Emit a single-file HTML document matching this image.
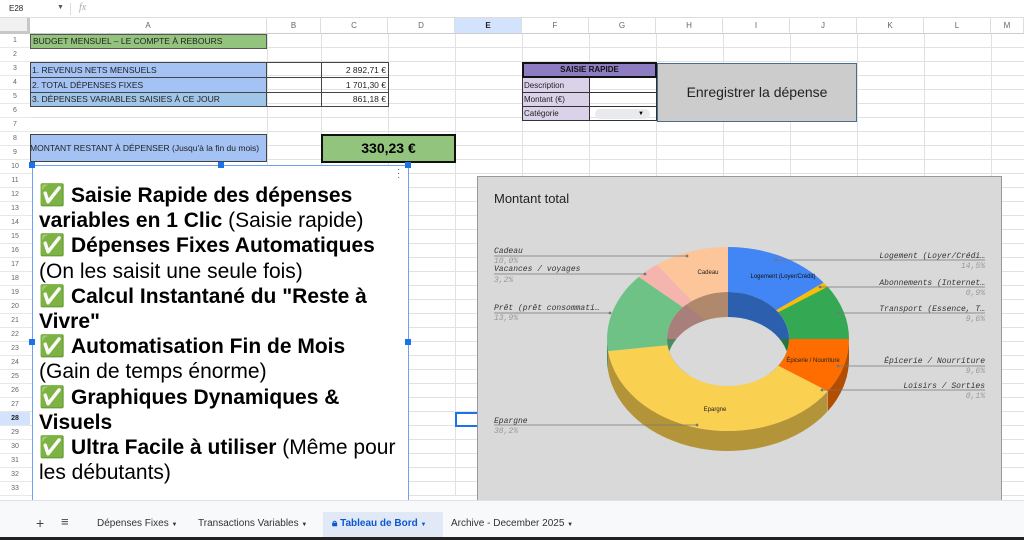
<!DOCTYPE html>
<html><head><meta charset="utf-8"><style>
*{margin:0;padding:0;box-sizing:border-box}
body{width:1024px;height:540px;overflow:hidden;background:#fff;font-family:"Liberation Sans",Arial,sans-serif;position:relative}
.a{position:absolute}
.grid{position:absolute;left:30px;top:34px;width:994px;height:462px;
background-image:repeating-linear-gradient(to bottom,transparent 0 13px,#e1e1e1 13px 14px);}
.vl{position:absolute;top:18px;width:1px;height:478px;background:#e1e1e1}
.ch{position:absolute;top:18px;height:16px;font-size:8px;color:#666;text-align:center;line-height:16px;border-right:1px solid #ddd;border-bottom:1px solid #ccc;background:#fff}
.rh{position:absolute;left:0;width:30px;height:14px;font-size:7px;color:#666;text-align:center;line-height:14px;background:#fff;border-bottom:1px solid #e8e8e8}
.cell{position:absolute;font-size:8.5px;color:#222;line-height:14px;white-space:nowrap;overflow:hidden}
.big{font-size:21px;line-height:25.2px;color:#000;white-space:nowrap}
.big b{font-weight:bold}
.tab{position:absolute;top:518px;font-size:10px;color:#333}
</style></head><body>
<div class="a" style="left:0;top:0;width:1024px;height:18px;background:#fff;border-bottom:1px solid #ddd"></div>
<div class="a" style="left:9px;top:4px;font-size:8px;color:#222">E28</div>
<div class="a" style="left:57px;top:4px;font-size:7px;color:#555">▼</div>
<div class="a" style="left:70px;top:3px;width:1px;height:12px;background:#ddd"></div>
<div class="a" style="left:79px;top:2px;font-size:10px;color:#aaa;font-style:italic;font-family:'Liberation Serif',serif">fx</div>

<div class="grid"></div>
<div class="vl" style="left:267px"></div><div class="vl" style="left:321px"></div><div class="vl" style="left:388px"></div><div class="vl" style="left:455px"></div><div class="vl" style="left:522px"></div><div class="vl" style="left:589px"></div><div class="vl" style="left:656px"></div><div class="vl" style="left:723px"></div><div class="vl" style="left:790px"></div><div class="vl" style="left:857px"></div><div class="vl" style="left:924px"></div><div class="vl" style="left:991px"></div>

<div class="a" style="left:0;top:18px;width:1024px;height:16px;background:#fff;border-bottom:1px solid #ccc"></div>
<div class="a" style="left:0;top:18px;width:30px;height:16px;background:#f1f1f1;border-right:3px solid #c8c8c8;border-bottom:3px solid #c8c8c8"></div>
<div class="ch" style="left:30px;width:237px">A</div>
<div class="ch" style="left:267px;width:54px">B</div>
<div class="ch" style="left:321px;width:67px">C</div>
<div class="ch" style="left:388px;width:67px">D</div>
<div class="ch" style="left:455px;width:67px;background:#d3e3fd;color:#1f1f1f;font-weight:bold">E</div>
<div class="ch" style="left:522px;width:67px">F</div>
<div class="ch" style="left:589px;width:67px">G</div>
<div class="ch" style="left:656px;width:67px">H</div>
<div class="ch" style="left:723px;width:67px">I</div>
<div class="ch" style="left:790px;width:67px">J</div>
<div class="ch" style="left:857px;width:67px">K</div>
<div class="ch" style="left:924px;width:67px">L</div>
<div class="ch" style="left:991px;width:33px">M</div>

<div class="a" style="left:0;top:34px;width:30px;height:462px;border-right:1px solid #ccc">
<div class="rh" style="top:0">1</div><div class="rh" style="top:14px">2</div><div class="rh" style="top:28px">3</div><div class="rh" style="top:42px">4</div><div class="rh" style="top:56px">5</div><div class="rh" style="top:70px">6</div><div class="rh" style="top:84px">7</div><div class="rh" style="top:98px">8</div><div class="rh" style="top:112px">9</div><div class="rh" style="top:126px">10</div><div class="rh" style="top:140px">11</div><div class="rh" style="top:154px">12</div><div class="rh" style="top:168px">13</div><div class="rh" style="top:182px">14</div><div class="rh" style="top:196px">15</div><div class="rh" style="top:210px">16</div><div class="rh" style="top:224px">17</div><div class="rh" style="top:238px">18</div><div class="rh" style="top:252px">19</div><div class="rh" style="top:266px">20</div><div class="rh" style="top:280px">21</div><div class="rh" style="top:294px">22</div><div class="rh" style="top:308px">23</div><div class="rh" style="top:322px">24</div><div class="rh" style="top:336px">25</div><div class="rh" style="top:350px">26</div><div class="rh" style="top:364px">27</div><div class="rh" style="top:378px;background:#d3e3fd;font-weight:bold;color:#1f1f1f">28</div><div class="rh" style="top:392px">29</div><div class="rh" style="top:406px">30</div><div class="rh" style="top:420px">31</div><div class="rh" style="top:434px">32</div><div class="rh" style="top:448px">33</div>
</div>

<div class="cell" style="left:30px;top:34px;width:237px;height:15px;background:#93c47d;border:1px solid #555;padding-left:2px;line-height:13px">BUDGET MENSUEL – LE COMPTE À REBOURS</div>
<div class="a" style="left:30px;top:62px;width:237px;height:45px;background:#a4c2f4;border:1px solid #444"></div>
<div class="cell" style="left:32px;top:63px">1. REVENUS NETS MENSUELS</div>
<div class="a" style="left:30px;top:77px;width:237px;height:1px;background:#444"></div>
<div class="cell" style="left:32px;top:78px">2. TOTAL DÉPENSES FIXES</div>
<div class="a" style="left:30px;top:92px;width:237px;height:1px;background:#444"></div>
<div class="a" style="left:31px;top:93px;width:235px;height:13px;background:#9fc5e8"></div>
<div class="cell" style="left:32px;top:92px">3. DÉPENSES VARIABLES SAISIES À CE JOUR</div>
<div class="a" style="left:267px;top:62px;width:122px;height:45px;border:1px solid #444;border-left:none"></div>
<div class="a" style="left:321px;top:62px;width:1px;height:45px;background:#444"></div>
<div class="a" style="left:267px;top:77px;width:122px;height:1px;background:#444"></div>
<div class="a" style="left:267px;top:92px;width:122px;height:1px;background:#444"></div>
<div class="cell" style="left:322px;top:63px;width:64px;text-align:right">2 892,71 €</div>
<div class="cell" style="left:322px;top:78px;width:64px;text-align:right">1 701,30 €</div>
<div class="cell" style="left:322px;top:92px;width:64px;text-align:right">861,18 €</div>

<div class="a" style="left:30px;top:134px;width:237px;height:28px;background:#a4c2f4;border:1px solid #444"></div>
<div class="cell" style="left:30px;top:141px;width:237px">MONTANT RESTANT À DÉPENSER (Jusqu'à la fin du mois)</div>
<div class="a" style="left:321px;top:134px;width:135px;height:29px;background:#93c47d;border:2px solid #111;font-size:14px;font-weight:bold;text-align:center;line-height:25px">330,23 €</div>

<div class="a" style="left:522px;top:62px;width:135px;height:16px;background:#8e7cc3;border:2px solid #111;font-size:8px;font-weight:bold;text-align:center;line-height:12px;color:#111">SAISIE RAPIDE</div>
<div class="a" style="left:522px;top:78px;width:135px;height:43px;border:1px solid #333;border-top:none"></div>
<div class="a" style="left:523px;top:78px;width:66px;height:42px;background:#d9d2e9"></div>
<div class="a" style="left:589px;top:78px;width:1px;height:43px;background:#333"></div>
<div class="a" style="left:522px;top:92px;width:135px;height:1px;background:#333"></div>
<div class="a" style="left:522px;top:106px;width:135px;height:1px;background:#333"></div>
<div class="cell" style="left:524px;top:79px;font-size:8px">Description</div>
<div class="cell" style="left:524px;top:93px;font-size:8px">Montant (€)</div>
<div class="cell" style="left:524px;top:107px;font-size:8px">Catégorie</div>
<div class="a" style="left:595px;top:109px;width:55px;height:10px;background:#e8eaed;border-radius:5px;font-size:6px;text-align:right;padding-right:6px;line-height:10px">▼</div>
<div class="a" style="left:657px;top:63px;width:200px;height:59px;background:#cccccc;border:1px solid #4a6b8a;font-size:14px;text-align:center;line-height:57px;color:#222">Enregistrer la dépense</div>

<div class="a" style="left:455px;top:412px;width:68px;height:15px;border:2px solid #1a73e8"></div>

<div class="a" style="left:32px;top:165px;width:377px;height:336px;background:#fff;border:1px solid #6ea0ef"></div>
<div class="a" style="left:29px;top:162px;width:6px;height:6px;background:#1a73e8"></div>
<div class="a" style="left:218px;top:162px;width:6px;height:6px;background:#1a73e8"></div>
<div class="a" style="left:405px;top:162px;width:6px;height:6px;background:#1a73e8"></div>
<div class="a" style="left:29px;top:339px;width:6px;height:6px;background:#1a73e8"></div>
<div class="a" style="left:405px;top:339px;width:6px;height:6px;background:#1a73e8"></div>
<div class="a" style="left:397px;top:168px;font-size:10px;color:#555;line-height:4px">·<br>·<br>·</div>
<div class="a big" style="left:39px;top:183px">
<span style="color:#3ca23c">✅</span> <b>Saisie Rapide des dépenses</b><br>
<b>variables en 1 Clic</b> (Saisie rapide)<br>
<span style="color:#3ca23c">✅</span> <b>Dépenses Fixes Automatiques</b><br>
(On les saisit une seule fois)<br>
<span style="color:#3ca23c">✅</span> <b>Calcul Instantané du "Reste à</b><br>
<b>Vivre"</b><br>
<span style="color:#3ca23c">✅</span> <b>Automatisation Fin de Mois</b><br>
(Gain de temps énorme)<br>
<span style="color:#3ca23c">✅</span> <b>Graphiques Dynamiques &amp;</b><br>
<b>Visuels</b><br>
<span style="color:#3ca23c">✅</span> <b>Ultra Facile à utiliser</b> (Même pour<br>
les débutants)
</div>

<div class="a" style="left:477px;top:176px;width:525px;height:325px;background:#d9d9d9;border:1px solid #999"></div>
<div class="a" style="left:494px;top:191px;font-size:13px;color:#222">Montant total</div>
<svg class="a" style="left:0;top:0" width="1024" height="540" viewBox="0 0 1024 540">
<path d="M849 339 A121 92 0 0 1 827.7 391.2 L827.7 411.2 A121 92 0 0 0 849 359 Z" fill="#b34d00"/>
<path d="M827.2 391.7 A121 92 0 0 1 608.1 351.1 L608.1 371.1 A121 92 0 0 0 827.2 411.7 Z" fill="#b39438"/>
<path d="M608.1 351.1 A121 92 0 0 1 607 339 L607 359 A121 92 0 0 0 608.1 371.1 Z" fill="#4e8a5e"/>
<path d="M728 247 A121 92 0 0 1 823.6 282.6 L776.2 310.2 A61 47 0 0 0 728 292 Z" fill="#4285f4"/>
<path d="M823.6 282.6 A121 92 0 0 1 827.7 286.8 L778.2 312.3 A61 47 0 0 0 776.2 310.2 Z" fill="#fbbc04"/>
<path d="M827.7 286.8 A121 92 0 0 1 849 339 L789 339 A61 47 0 0 0 778.2 312.3 Z" fill="#34a853"/>
<path d="M849 339 A121 92 0 0 1 827.7 391.2 L778.2 365.7 A61 47 0 0 0 789 339 Z" fill="#ff6d01"/>
<path d="M827.7 391.2 A121 92 0 0 1 608.1 351.1 L667.5 345.2 A61 47 0 0 0 778.2 365.7 Z" fill="#f9d050"/>
<path d="M608.1 351.1 A121 92 0 0 1 638.8 276.9 L683 307.3 A61 47 0 0 0 667.5 345.2 Z" fill="#6fc286"/>
<path d="M638.8 276.9 A121 92 0 0 1 656.9 264.6 L692.1 301 A61 47 0 0 0 683 307.3 Z" fill="#f5b5ae"/>
<path d="M656.9 264.6 A121 92 0 0 1 728 247 L728 292 A61 47 0 0 0 692.1 301 Z" fill="#fdc69a"/>
<clipPath id="h"><ellipse cx="728" cy="339" rx="61" ry="47"/></clipPath>
<g clip-path="url(#h)">
<path d="M728 339 L728 280 L800 280 L800 339 Z" fill="#2c5fae"/>
<path d="M728 339 L800 339 L800 400 Z" fill="#23783c"/>
<path d="M728 339 L660 320 L660 280 L728 280 Z" fill="#b0896c"/>
<path d="M728 339 L680 300 L660 300 L660 339 Z" fill="#a87f7b"/>
<path d="M728 339 L660 339 L660 400 Z" fill="#4d8a5e"/>
<ellipse cx="728" cy="364" rx="61" ry="47" fill="#d9d9d9"/>
</g>
<g font-family="Liberation Sans,sans-serif" font-size="6" fill="#222" text-anchor="middle">
<text x="708" y="274">Cadeau</text>
<text x="783" y="278" fill="#111">Logement (Loyer/Crédit)</text>
<text x="813" y="362">Épicerie / Nourriture</text>
<text x="715" y="411">Epargne</text>
</g>
<g stroke="#777" stroke-width="0.8" fill="#777">
<line x1="494" y1="256" x2="687" y2="256"/><circle cx="687" cy="256" r="1"/>
<line x1="494" y1="274" x2="645" y2="274"/><circle cx="645" cy="274" r="1"/>
<line x1="494" y1="313" x2="610" y2="313"/><circle cx="610" cy="313" r="1"/>
<line x1="494" y1="425" x2="697" y2="425"/><circle cx="697" cy="425" r="1"/>
<line x1="776" y1="260" x2="985" y2="260"/><circle cx="776" cy="260" r="1"/>
<line x1="820" y1="287" x2="985" y2="287"/><circle cx="820" cy="287" r="1"/>
<line x1="838" y1="313" x2="985" y2="313"/><circle cx="838" cy="313" r="1"/>
<line x1="838" y1="366" x2="985" y2="366"/><circle cx="838" cy="366" r="1"/>
<line x1="822" y1="390" x2="985" y2="390"/><circle cx="822" cy="390" r="1"/>
</g>
<g font-family="Liberation Mono,monospace" font-size="8" font-style="italic">
<text x="494" y="253" fill="#333">Cadeau</text><text x="494" y="263" fill="#999">10,0%</text>
<text x="494" y="271" fill="#333">Vacances / voyages</text><text x="494" y="282" fill="#999">3,2%</text>
<text x="494" y="310" fill="#333">Prêt (prêt consommati…</text><text x="494" y="320" fill="#999">13,9%</text>
<text x="494" y="423" fill="#333">Epargne</text><text x="494" y="433" fill="#999">38,2%</text>
<g text-anchor="end">
<text x="985" y="258" fill="#333">Logement (Loyer/Crédi…</text><text x="985" y="268" fill="#999">14,5%</text>
<text x="985" y="285" fill="#333">Abonnements (Internet…</text><text x="985" y="295" fill="#999">0,9%</text>
<text x="985" y="311" fill="#333">Transport (Essence, T…</text><text x="985" y="321" fill="#999">9,6%</text>
<text x="985" y="363" fill="#333">Épicerie / Nourriture</text><text x="985" y="373" fill="#999">9,6%</text>
<text x="985" y="388" fill="#333">Loisirs / Sorties</text><text x="985" y="398" fill="#999">0,1%</text>
</g></g>
</svg>

<div class="a" style="left:0;top:500px;width:1024px;height:37px;background:#f8f9fa;border-top:1px solid #e0e0e0"></div>
<div class="a" style="left:36px;top:515px;font-size:14px;color:#444">+</div>
<div class="a" style="left:61px;top:514px;font-size:13px;color:#444">≡</div>
<div class="tab" style="left:97px">Dépenses Fixes <span style="font-size:6px">▼</span></div>
<div class="tab" style="left:198px">Transactions Variables <span style="font-size:6px">▼</span></div>
<div class="a" style="left:323px;top:512px;width:120px;height:25px;background:#e1e9f7"></div>
<div class="tab" style="left:332px;color:#0b57d0;font-weight:bold">🔒︎ Tableau de Bord <span style="font-size:6px">▼</span></div>
<div class="tab" style="left:451px">Archive - December 2025 <span style="font-size:6px">▼</span></div>
<div class="a" style="left:0;top:537px;width:1024px;height:3px;background:#222"></div>
</body></html>
